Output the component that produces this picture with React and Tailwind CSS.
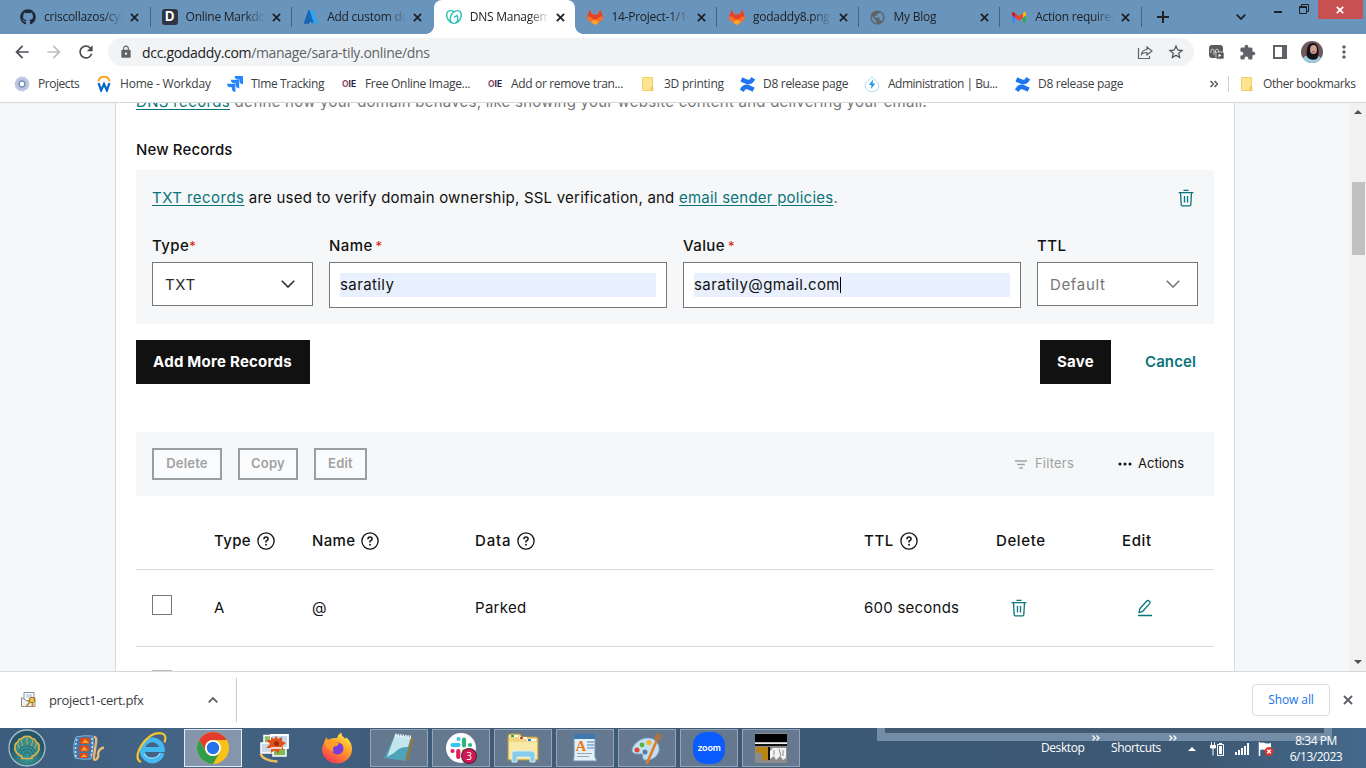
import React from "react";
import { FaGithub } from "react-icons/fa";
import { SiGodaddy, SiConfluence, SiJira } from "react-icons/si";
import { MdArrowBack, MdArrowForward, MdRefresh, MdLock, MdStarOutline, MdExtension, MdMoreVert, MdPublic } from "react-icons/md";

/* ---------- small drawings ---------- */

const Cross = ({ className = "", w = 2 }) => (
  <svg viewBox="0 0 10 10" className={className} fill="none" stroke="currentColor" strokeWidth={w}>
    <path d="M1 1l8 8M9 1l-8 8" />
  </svg>
);

const Gitlab = () => (
  <svg viewBox="0 0 16 16" className="h-4 w-4">
    <path d="M2.800.8L5.200 5.500h5.600L13.200.8 16 8q.3 2-1.500 3.500L8 16 1.500 11.500Q-.3 10 0 8z" fill="#fc6d26" />
    <path d="M2.800.8L5.200 5.500h5.600L13.200.8 15.800 7.300q-2.300 0-4 1.300L8 11.500 4.200 8.600q-1.700-1.300-4-1.300z" fill="#e24329" />
    <path d="M4 13.200L8 10.200l4 3L8 16z" fill="#fca326" />
  </svg>
);

const Dillinger = () => (
  <span className="flex h-4 w-4 items-center justify-center rounded-[3px] bg-[#2f3440] font-['Inter',sans-serif] text-[13px] font-bold text-white">D</span>
);

const Azure = () => (
  <svg viewBox="0 0 16 16" className="h-4 w-4">
    <path d="M5.600 1h4L6 14.500H1z" fill="#114a8b" />
    <path d="M9.500 1H5.600L.8 14.500h3.600l1.200-3 4 3z" fill="#1568b8" />
    <path d="M6.500 1h4L15.200 14.700h-4.400z" fill="#2fa4ea" />
    <path d="M7.800 5l3 9.500-5.600-3.800h3.900z" fill="#0a6cc0" />
  </svg>
);

const Gmail = () => (
  <svg viewBox="0 0 16 16" className="h-4 w-4">
    <path d="M1 4v9.500h3.200V8z" fill="#4285f4" />
    <path d="M15 4v9.500h-3.200V8z" fill="#34a853" />
    <path d="M11.800 4.200Q15 1.800 15 4v2.300l-3.200 2.500z" fill="#fbbc04" />
    <path d="M4 4.200V8.800L8 11.800l4-3V4.200L8 7.200z" fill="#ea4335" />
    <path d="M1 4q0-2.200 3.200.2v4.600L1 6.300z" fill="#c5221f" />
  </svg>
);

const Workday = () => (
  <svg viewBox="0 0 16 16" className="h-4 w-4" fill="none">
    <path d="M2.500 5.500a5.500 4.800 0 0 1 11 0" stroke="#f9a01b" strokeWidth="2" />
    <path d="M2.600 7l2.500 7.500L8 8l2.900 6.500L13.400 7" stroke="#0568c4" strokeWidth="2.200" />
  </svg>
);

const Oie = () => (
  <span className="flex h-4 w-4 items-center justify-center font-['Inter',sans-serif] text-[8.500px] font-bold">
    <span className="text-[#8a4a68]">O</span><span className="text-[#2b2140]">IE</span>
  </span>
);

const Gear = () => (
  <svg viewBox="0 0 16 16" className="h-4 w-4">
    <circle cx="8" cy="8" r="7.200" fill="#b9c6de" stroke="#cfd8e8" strokeDasharray="2.500 2" />
    <circle cx="8" cy="8" r="3.700" fill="#7a93c0" />
    <circle cx="8" cy="8" r="2.200" fill="#fff" />
  </svg>
);

const Folder = () => (
  <svg viewBox="0 0 16 16" className="h-4 w-4">
    <path d="M2.500 1.500h10V13h-1v1.500h-9z" fill="#fee391" stroke="#f0cf64" />
    <path d="M11 14.500V11.500q1-1.500 2 0v3z" fill="#fee391" stroke="#e5b93c" strokeWidth=".8" />
  </svg>
);

const Drop = () => (
  <svg viewBox="0 0 16 16" className="h-4 w-4">
    <path d="M8 .8C10 4 14.800 5.500 14.800 9.500a6.500 6 0 0 1-13.600 0C1.200 5.500 6 4 8 .8z" fill="#fff" stroke="#a9ddf3" />
    <path d="M9 3.500L5 9h2.500L7 13l4.200-5.500H8.600z" fill="#1798d9" />
  </svg>
);

const Trash = () => (
  <svg viewBox="0 0 18 18" className="h-[18px] w-[18px] text-[#09757a]" fill="none" stroke="currentColor" strokeWidth="1.300">
    <path d="M6.500 1.400h5M1.600 3.600h14.800M3.500 3.600l.7 12.100q.1 1.200 1.100 1.200h7.400q1 0 1.100-1.200l.7-12.100M7.500 7v6.500M10.500 7v6.500" />
  </svg>
);

const Pencil = () => (
  <svg viewBox="0 0 18 18" className="h-[18px] w-[18px] text-[#09757a]" fill="none" stroke="currentColor" strokeWidth="1.300" strokeLinejoin="round">
    <path d="M3 13.700l.8-3.900L10.800 2q1-1 2.400.1 1.400 1.200.6 2.300L6.800 12.300zM2 16.500h14" />
  </svg>
);

const Help = () => (
  <svg viewBox="0 0 18 18" className="h-[18px] w-[18px] text-[#111]" fill="none" stroke="currentColor">
    <circle cx="9" cy="9" r="8.100" strokeWidth="1.300" />
    <path d="M6.900 7.200Q7 5.100 9 5.100t2.100 1.900Q11.100 8.300 9 9.200v1.200" strokeWidth="1.500" />
    <circle cx="9" cy="12.700" r=".95" fill="currentColor" stroke="none" />
  </svg>
);

const Chevron = ({ className }) => (
  <svg viewBox="0 0 14 8" className={className} fill="none" stroke="currentColor" strokeWidth="1.600">
    <path d="M.8.800L7 7 13.200.800" />
  </svg>
);

/* ---------- browser frame ---------- */

const TABS = [
  { icon: <FaGithub className="h-4 w-4 text-[#1f2937]" />, text: "criscollazos/cybersec" },
  { icon: <Dillinger />, text: "Online Markdown" },
  { icon: <Azure />, text: "Add custom domain" },
  { icon: <SiGodaddy className="h-4 w-4 text-[#2fbfb9]" />, text: "DNS Management", active: true },
  { icon: <Gitlab />, text: "14-Project-1/1-Less" },
  { icon: <Gitlab />, text: "godaddy8.png (1" },
  { icon: <MdPublic className="h-[17px] w-[17px] shrink-0 text-[#5f6368]" />, text: "My Blog" },
  { icon: <Gmail />, text: "Action required: ve" },
];

function TabStrip() {
  return (
    <div className="flex h-[34px] shrink-0 bg-[#6995bd] pl-[9px]">
      {TABS.map((t, i) => (
        <div
          key={t.text}
          className={
            "relative flex h-[34px] w-[141.600px] shrink-0 items-center " +
            (i === 3 || i === 4 || i === 5 ? "pl-[12px] " : "pl-[11px] ") +
            (t.active ? "rounded-t-[8px] bg-white" : "")
          }
        >
          {t.active && (
            <>
              <span className="absolute bottom-0 -left-2 h-2 w-2 bg-[radial-gradient(circle_at_0_0,transparent_7.5px,white_8px)]" />
              <span className="absolute -right-2 bottom-0 h-2 w-2 bg-[radial-gradient(circle_at_100%_0,transparent_7.5px,white_8px)]" />
            </>
          )}
          <span className="flex h-4 w-4 items-center justify-center">{t.icon}</span>
          <span className="ml-2 w-[79px] overflow-hidden text-[12px] tracking-[-0.25px] whitespace-nowrap text-[#202124] [mask-image:linear-gradient(to_right,black_75%,transparent)]">
            {t.text}
          </span>
          <Cross className="ml-[7px] h-[9px] w-[9px] text-[#202124]" />
          {i !== 2 && i !== 3 && <span className="ml-auto h-5 w-px bg-[#46627d]" />}
        </div>
      ))}
      <svg viewBox="0 0 12 12" className="mt-[11px] ml-[15px] h-3 w-3" stroke="#202124" strokeWidth="2"><path d="M6 0v12M0 6h12" /></svg>
      <svg viewBox="0 0 10 6" className="mt-[14px] ml-[67px] h-[6px] w-[10px]" fill="none" stroke="#202124" strokeWidth="1.800"><path d="M.7.700L5 5 9.300.700" /></svg>
      <span className="mt-[11px] ml-[28px] h-[2px] w-[8px] bg-[#202124]" />
      <svg viewBox="0 0 10 10" className="mt-1 ml-[17px] h-[10px] w-[10px]" fill="none" stroke="#202124"><path d="M.5 2.500h7v7h-7zM2.500 2.500v-2h7v7h-2M.5 3.500h7" /></svg>
      <span className="ml-[9px] flex h-[19px] w-[45px] items-center justify-center bg-[#c75050]"><Cross className="h-2 w-2 text-white" w={2.2} /></span>
    </div>
  );
}

function Toolbar() {
  return (
    <div className="flex h-[32px] shrink-0 items-center bg-white pt-1 text-[#5f6368]">
      <MdArrowBack className="ml-[12px] h-5 w-5 text-[#4b4f54]" />
      <MdArrowForward className="ml-[12px] h-5 w-5 text-[#bcbec1]" />
      <MdRefresh className="ml-[12px] h-5 w-5 text-[#4b4f54]" />
      <div className="ml-[12px] flex h-7 w-[1086px] items-center rounded-full bg-[#f1f3f4]">
        <MdLock className="ml-[11px] h-[14px] w-[14px]" />
        <span className="ml-[9px] text-[14px] tracking-[-0.32px] whitespace-nowrap text-[#5f6368]">
          <span className="text-[#202124]">dcc.godaddy.com</span>/manage/sara-tily.online/dns
        </span>
        <svg viewBox="0 0 16 16" className="ml-auto h-4 w-4" fill="none" stroke="#5f6368" strokeWidth="1.200">
          <path d="M1.500 4v10.500H12.500V12M4.500 10.500Q5 6 10 5.500V3l5 4-5 4V8.500q-4 0-5.500 2z" />
        </svg>
        <MdStarOutline className="mr-[9px] ml-[14px] h-[18px] w-[18px] text-[#4b4f54]" />
      </div>
      <svg viewBox="0 0 16 16" className="ml-[14px] h-4 w-4">
        <rect x="1" y="1" width="14" height="13" rx="3" fill="#5b5b5b" />
        <path d="M3 9V6q1.500-2 3 0v5M7.500 9V6q1.500-2 3 0v3" stroke="#cfcfcf" fill="none" />
        <rect x="8" y="8" width="8" height="7" rx="1.500" fill="#555" stroke="#ddd" strokeWidth=".8" />
        <path d="M10.500 9.800v3.400l3-1.700z" fill="#fff" />
      </svg>
      <MdExtension className="ml-[15px] h-[17px] w-[17px]" />
      <svg viewBox="0 0 14 14" className="ml-[17px] h-[14px] w-[14px]"><path d="M1 1h12v12H1z" fill="none" stroke="#5f6368" strokeWidth="2" /><path d="M9 0h5v14H9z" fill="#5f6368" /></svg>
      <svg viewBox="0 0 22 22" className="ml-[14px] h-[22px] w-[22px]">
        <defs><clipPath id="avatar"><circle cx="11" cy="11" r="11" /></clipPath></defs>
        <g clipPath="url(#avatar)">
          <path d="M0 0h22v22H0z" fill="#6e5a5e" />
          <path d="M0 22q1-6 5-7l12 0q4 1 5 7z" fill="#9ccbdc" />
          <path d="M12 2q5 0 5.500 7 .5 7-2 9-5 2-9-1.500Q5 14 6 8q1-6 6-6z" fill="#17131a" />
          <ellipse cx="12.500" cy="8.500" rx="3.400" ry="4.600" fill="#d3a28e" />
          <path d="M11 10.800h3" stroke="#a04848" />
        </g>
      </svg>
      <MdMoreVert className="ml-[11px] h-5 w-5" />
    </div>
  );
}

const Bookmark = ({ w, icon, children, ls }) => (
  <div className={"flex shrink-0 items-center " + w}>
    <span className="flex h-4 w-4 shrink-0 items-center justify-center">{icon}</span>
    <span className={"ml-2 text-[12px] whitespace-nowrap text-[#3c4043] " + ls}>{children}</span>
  </div>
);

function Bookmarks() {
  const conf = <SiConfluence className="h-[15px] w-[15px] text-[#1f74f0]" />;
  return (
    <div className="flex h-[37px] shrink-0 items-center border-b border-[#d5d8db] bg-white pl-[14px]">
      <Bookmark w="w-[82px]" ls="tracking-[-0.45px]" icon={<Gear />}>Projects</Bookmark>
      <Bookmark w="w-[131px]" ls="tracking-[-0.2px]" icon={<Workday />}>Home - Workday</Bookmark>
      <Bookmark w="w-[114px]" ls="tracking-[-0.38px]" icon={<SiJira className="h-4 w-4 text-[#2684ff]" />}>TIme Tracking</Bookmark>
      <Bookmark w="w-[146px]" ls="tracking-[-0.32px]" icon={<Oie />}>Free Online Image...</Bookmark>
      <Bookmark w="w-[153px]" ls="tracking-[-0.34px]" icon={<Oie />}>Add or remove tran...</Bookmark>
      <Bookmark w="w-[99px]" ls="tracking-[-0.25px]" icon={<Folder />}>3D printing</Bookmark>
      <Bookmark w="w-[125px]" ls="tracking-[-0.3px]" icon={conf}>D8 release page</Bookmark>
      <Bookmark w="w-[150px]" ls="tracking-[-0.5px]" icon={<Drop />}>Administration | Bu...</Bookmark>
      <Bookmark w="w-[196px]" ls="tracking-[-0.3px]" icon={conf}>D8 release page</Bookmark>
      <svg viewBox="0 0 8 8" className="h-2 w-2" fill="none" stroke="#4b4f54" strokeWidth="1.400"><path d="M.5 1L3.500 4l-3 3M4.500 1l3 3-3 3" /></svg>
      <span className="ml-[10px] h-4 w-px bg-[#cfd1d4]" />
      <span className="w-[10px]" />
      <Bookmark w="w-[120px]" ls="tracking-[-0.4px]" icon={<Folder />}>Other bookmarks</Bookmark>
    </div>
  );
}

/* ---------- page ---------- */

const Label = ({ children, star, tight }) => (
  <div className="h-[32px] text-[15px] leading-[32px] font-medium tracking-[0.4px] text-[#111]">
    {children}
    {star && <span className={"text-[13px] font-normal text-[#db1802] " + (tight ? "" : "ml-[3px]")}>*</span>}
  </div>
);

const TextBox = ({ value, caret }) => (
  <div className="h-[46px] border border-[#767676] bg-white p-[10px]">
    <div className="flex h-6 items-center bg-[#e8f0fe] text-[15px] tracking-[0.4px] text-[#111]">
      {value}
      {caret && <span className="h-4 w-px bg-black" />}
    </div>
  </div>
);

const SelectBox = ({ value, muted }) => (
  <div className={"flex h-11 items-center justify-between border border-[#767676] bg-white pr-[17px] pl-3 text-[15px] tracking-[0.65px] " + (muted ? "text-[#767676]" : "text-[#2b2b2b]")}>
    <span className="pt-[2px]">{value}</span>
    <Chevron className="h-2 w-[14px]" />
  </div>
);

const GhostButton = ({ w, children }) => (
  <button className={"flex h-8 items-center justify-center border-2 border-[#9c9d9e] bg-[#fafbfc] text-[13px] font-semibold tracking-[0.2px] text-[#a0a1a2] " + w}>{children}</button>
);

const Head = ({ children, help, ls = "" }) => (
  <div className={"flex items-center gap-[6px] whitespace-nowrap " + ls}>
    <span className="pt-px">{children}</span>
    {help && <Help />}
  </div>
);

const GRID = "grid grid-cols-[62px_98px_163px_389px_132px_126px_1fr] items-center pl-4";
const LINK = "text-[#09757a] underline underline-offset-2";

function Page() {
  return (
    <div className="flex h-[568px] shrink-0 overflow-hidden bg-[#f5f7f8] font-['Inter',sans-serif]">
      <div className="ml-[115px] h-full w-[1120px] overflow-hidden border-x border-[#d6dadd] bg-white px-5">
        <p className="-mt-[13px] h-6 text-[15px] leading-6 tracking-[0.235px] whitespace-nowrap text-[#767676]">
          <span className={LINK + " tracking-[0.35px]"}>DNS records</span> define how your domain behaves, like showing your website content and delivering your email.
        </p>
        <h2 className="mt-[24px] h-6 text-[15px] leading-6 font-medium tracking-[0.12px] text-[#111]">New Records</h2>

        <section className="mt-2 h-[154px] bg-[#f5f7f8] px-4 pt-4">
          <div className="flex h-6 items-center justify-between pr-[3px]">
            <p className="text-[15px] leading-6 tracking-[0.215px] whitespace-nowrap text-[#111]">
              <span className={LINK + " tracking-[0.45px]"}>TXT records</span> are used to verify domain ownership, SSL verification, and{" "}
              <span className={LINK + " tracking-[0.24px]"}>email sender policies</span><span className="text-[#767676]">.</span>
            </p>
            <Trash />
          </div>
          <div className="mt-5 grid grid-cols-[161px_338px_338px_161px] gap-x-4">
            <div><Label star tight>Type</Label><SelectBox value="TXT" /></div>
            <div><Label star>Name</Label><TextBox value="saratily" /></div>
            <div><Label star>Value</Label><TextBox value="saratily@gmail.com" caret /></div>
            <div><Label>TTL</Label><SelectBox value="Default" muted /></div>
          </div>
        </section>

        <div className="mt-4 flex h-11 items-center text-[15px] tracking-[0.24px]">
          <button className="h-11 w-[174px] bg-[#111] pr-px font-bold text-white">Add More Records</button>
          <button className="ml-auto h-11 w-[71px] bg-[#111] font-bold text-white">Save</button>
          <button className="mr-[18px] ml-[34px] w-[51px] font-semibold tracking-[0.1px] text-[#09757a]">Cancel</button>
        </div>

        <div className="mt-12 flex h-16 items-center bg-[#f5f7f8] pr-[30px] pl-4">
          <GhostButton w="w-[70px]">Delete</GhostButton>
          <GhostButton w="w-[60px] ml-4">Copy</GhostButton>
          <GhostButton w="w-[53px] ml-4">Edit</GhostButton>
          <svg viewBox="0 0 12 9" className="ml-auto h-[9px] w-3" stroke="#a0a1a2" strokeWidth="1.500"><path d="M0 1h12M2.200 4.500h7.600M4.200 8h3.600" /></svg>
          <span className="ml-2 w-[39px] text-[13px] tracking-[0.2px] text-[#a0a1a2]">Filters</span>
          <svg viewBox="0 0 14 4" className="ml-[44px] h-1 w-[14px]" fill="#111"><circle cx="2" cy="2" r="1.500" /><circle cx="7" cy="2" r="1.500" /><circle cx="12" cy="2" r="1.500" /></svg>
          <span className="ml-[6px] w-[46px] text-[13px] text-[#111]">Actions</span>
        </div>

        <div className={GRID + " h-[74px] border-b border-[#d4dbe0] pt-[17px] text-[15px] font-medium tracking-[0.6px] text-[#111]"}>
          <span />
          <Head help ls="tracking-[0.35px]">Type</Head>
          <Head help ls="tracking-[0.35px]">Name</Head>
          <Head help ls="tracking-[0.8px]">Data</Head>
          <Head help>TTL</Head>
          <Head>Delete</Head>
          <Head>Edit</Head>
        </div>
        <div className={GRID + " h-[77px] border-b border-[#d4dbe0] text-[15px] tracking-[0.3px] text-[#111]"}>
          <span className="mb-[6px] h-5 w-5 border border-[#767676] bg-white" />
          <span>A</span>
          <span>@</span>
          <span>Parked</span>
          <span className="tracking-[0.24px]">600 seconds</span>
          <span className="ml-[14px]"><Trash /></span>
          <span className="ml-[14px]"><Pencil /></span>
        </div>
        <div className="pt-[23px] pl-4">
          <span className="block h-5 w-5 border border-[#bdbdbd]" />
        </div>
      </div>
      <div className="ml-auto flex w-4 flex-col items-center bg-[#f1f1f1]">
        <svg viewBox="0 0 8 4" className="mt-[7px] h-1 w-2" fill="#505050"><path d="M0 4L4 0l4 4z" /></svg>
        <span className="mt-[68px] h-[73px] w-[13px] bg-[#c1c1c1]" />
        <svg viewBox="0 0 8 4" className="mt-auto mb-[7px] h-1 w-2" fill="#505050"><path d="M0 0l4 4 4-4z" /></svg>
      </div>
    </div>
  );
}

/* ---------- downloads bar ---------- */

function Downloads() {
  return (
    <div className="flex h-[57px] shrink-0 items-center border-t border-[#d5d8db] bg-white">
      <svg viewBox="0 0 16 16" className="ml-[21px] h-4 w-4">
        <path d="M3 .5h10v8H3z" fill="#fff" stroke="#8b8f94" />
        <path d="M5 3h6M5 5h6" stroke="#9bb7d4" />
        <path d="M.5 5.500L8 10l6-4.500v9H.5z" fill="#f0f0ee" stroke="#8b8f94" />
        <circle cx="11" cy="8" r="2.700" fill="#f7c548" stroke="#9a6a14" />
        <path d="M9.500 9.500L5.500 14M11.500 10.500v4.500" stroke="#c48a22" strokeWidth="1.800" />
      </svg>
      <span className="ml-3 w-[96px] pt-px text-[13px] tracking-[-0.33px] whitespace-nowrap text-[#3c4043]">project1-cert.pfx</span>
      <svg viewBox="0 0 10 6" className="ml-[63px] h-[6px] w-[10px]" fill="none" stroke="#5f6368" strokeWidth="1.800"><path d="M.7 5.300L5 1l4.300 4.300" /></svg>
      <span className="ml-[18px] h-11 w-px bg-[#c9cbce]" />
      <button className="ml-auto h-8 w-[78px] rounded-[4px] border border-[#dadce0] text-[12px] font-medium tracking-[-0.1px] text-[#1a73e8]">Show all</button>
      <Cross className="mr-[13px] ml-[13px] h-[10px] w-[10px] text-[#5f6368]" />
    </div>
  );
}

/* ---------- taskbar ---------- */

const Shell = () => (
  <svg viewBox="0 0 38 38" className="h-[38px] w-[38px]">
    <defs><radialGradient id="orb" cy=".75"><stop offset="0" stopColor="#3fa39c" /><stop offset="1" stopColor="#23566a" /></radialGradient></defs>
    <circle cx="19" cy="19" r="18" fill="url(#orb)" stroke="#a9bfca" strokeWidth="1.300" />
    <path d="M14 29.500v-2l-3-1.500Q6 22 7 18q-.5-3.500 3-5 .5-3.500 4-3.500Q16 7 19 7.500q3-.5 5 2 3.500 0 4 3.500 3.500 1.500 3 5 1 4-4 8l-3 1.500v2z" fill="#358f8c" stroke="#e3b04d" strokeWidth="1.700" strokeLinejoin="round" />
    <path d="M12 20L9 14M14.500 17L13 10.500M19 15.500V8.500M23.500 17L25 10.500M26 20l3-6" stroke="#c9a854" strokeWidth="1" />
    <path d="M11 23q1-6 8-6t8 6M13 25q1-5 6-5t6 5M15.500 27q.5-4 3.500-4t3.500 4" stroke="#276f78" strokeWidth="1.200" fill="none" />
  </svg>
);

const MovieMaker = () => (
  <svg viewBox="0 0 34 28" className="h-7 w-[34px]">
    <path d="M4 3q8-2 17-1 1 12-2 23-8 1-16-1Q0 12 4 3z" fill="#3c78b0" stroke="#7eb2dc" />
    <path d="M8 4q5-1 10 0l-.5 6H7.500zM7 11.500h10.500l-.5 6H7zM7 19h9.500l-.5 5H7.500z" fill="#d94a18" />
    <path d="M10 9l3-4 4 4zM9 16.500l3-4 4 4zM9 23l3-3 3 3z" fill="#f5a62c" />
    <path d="M4.800 5q-2 9-.8 18M20 4q1 9-1 19" fill="none" stroke="#cfe4f4" strokeWidth="1.500" strokeDasharray="2 2" />
    <path d="M22 3q3 0 2 6t-2 13q-1 5 2 3.500 3-2 2-6 1-5 6-6" fill="none" stroke="#e9b878" strokeWidth="2.400" />
  </svg>
);

const Explorer = () => (
  <svg viewBox="0 0 32 32" className="h-8 w-8" fill="none">
    <path d="M27 21A10 10.500 0 1 1 27.300 17.500H9" stroke="#45b8f0" strokeWidth="5" />
    <path d="M25 21.500A9.500 9.500 0 0 1 9 22" stroke="#9adffb" strokeWidth="1.300" />
    <path d="M6 30Q-1 27 6 14 16-1 27 1.500q5 1 2.500 9" stroke="#f3c62c" strokeWidth="2.200" />
  </svg>
);

const Chrome = () => (
  <svg viewBox="0 0 32 32" className="h-8 w-8">
    <circle cx="16" cy="16" r="16" fill="#fbc116" />
    <path d="M2.150 8A16 16 0 0 1 29.850 8H16a8 8 0 0 0-6.930 12z" fill="#e33b2e" />
    <path d="M2.150 8A16 16 0 0 0 16 32l6.930-12A8 8 0 0 1 9.070 20z" fill="#2f9e4c" />
    <circle cx="16" cy="16" r="8" fill="#fff" />
    <circle cx="16" cy="16" r="6.200" fill="#2473e8" />
  </svg>
);

const Gallery = () => (
  <svg viewBox="0 0 32 30" className="h-[30px] w-8">
    <path d="M1.500 21q3 7 17 7.500" fill="none" stroke="#edba62" strokeWidth="2.500" />
    <path d="M14 12h13v11H14z" fill="#7dbb5b" stroke="#fff" strokeWidth="1.500" />
    <path d="M5 2.500h10v10H5z" fill="#8bbf6a" stroke="#fff" strokeWidth="1.500" />
    <path d="M2 10h12v10H2z" fill="#c9d8e8" stroke="#fff" strokeWidth="1.500" />
    <path d="M12 2h17v13H12z" fill="#c5d7ea" stroke="#fff" strokeWidth="1.800" />
    <path d="M17 3l2 3 4-2v4l4 2-4 3 2 4-4-1-2 5-3-4-4 3V15l-5 0 4-4-4-4 5 0v-3l3 2z" fill="#e2521a" />
    <path d="M12 15h11" stroke="#fff" strokeWidth="1.500" />
    <circle cx="17.500" cy="10.500" r="2.500" fill="#9c2f0c" />
  </svg>
);

const Firefox = () => (
  <svg viewBox="0 0 32 32" className="h-8 w-8">
    <defs><linearGradient id="fx" x1=".8" y1="0" x2=".2" y2="1"><stop offset="0" stopColor="#fff04a" /><stop offset=".45" stopColor="#ff9a26" /><stop offset="1" stopColor="#f5305c" /></linearGradient></defs>
    <path d="M3.500 10l1.500-5q1 2 2.500 2.500 2.500-1.500 6-1.500L16 6q1.500-4 4-5.500.5 3.500 4 6l1.500-1q5.500 5 5.500 11.500a15 14.500 0 0 1-30 0q0-4 2.500-7z" fill="url(#fx)" />
    <circle cx="16.500" cy="16.500" r="6" fill="#7a3be0" />
    <path d="M3 9.500q6-3 9 0l6 1.500q-1 3.500-5 3.500-2 2 0 5-7-1-10-10z" fill="#ff9d28" />
  </svg>
);

const Notepad = () => (
  <svg viewBox="0 0 32 32" className="h-8 w-8">
    <path d="M27 5l4 2-6 22-5-1z" fill="#8a7a4a" />
    <path d="M12 3l16 2-6 24-21-3z" fill="#4fa3b8" />
    <path d="M12 3l16 2-3 10q-8-1-14 6l-7 4z" fill="#c3e5ec" />
    <path d="M12 3l16 2" stroke="#eef3f4" strokeWidth="3" strokeDasharray="1.500 1" />
  </svg>
);

const Slack = () => (
  <span className="relative block h-[30px] w-[30px]">
    <svg viewBox="0 0 30 30" className="h-[30px] w-[30px]">
      <circle cx="15" cy="15" r="15" fill="#fff" />
      <g strokeWidth="4.200" strokeLinecap="round">
        <path d="M6.500 12h6M12.500 6h.01" stroke="#36c5f0" />
        <path d="M18 6.500v6M24 12h.01" stroke="#2eb67d" />
        <path d="M18 18h6M18 24h.01" stroke="#ecb22e" />
        <path d="M12.300 18v6M6.500 18h.01" stroke="#e01e5a" />
      </g>
    </svg>
    <span className="absolute top-[16px] left-[16px] flex h-[14px] w-[14px] items-center justify-center rounded-full bg-[#cf1850] text-[10px] leading-none text-white ring-1 ring-[#4d2540]">3</span>
  </span>
);

const Files = () => (
  <svg viewBox="0 0 32 30" className="h-[30px] w-8">
    <path d="M1 3q0-2 2-2h10l2 3h14q2 0 2 2v21H1z" fill="#f0d67c" stroke="#b8953a" />
    <path d="M3 2h8v2H3z" fill="#fff" /><path d="M4 2h3v2H4z" fill="#2aa83f" />
    <path d="M12 4h8v2h-8z" fill="#fff" /><path d="M13 4h3v2h-3z" fill="#d8452b" />
    <path d="M20 6h9v2h-9z" fill="#fff" /><path d="M21 6h3v2h-3z" fill="#2a80d8" />
    <path d="M2 9h28v17H2z" fill="#f9e9a6" />
    <path d="M5 29V20q0-2 3-2h16q4 0 4 3v8h-5v-5H10v5z" fill="#86cbea" stroke="#d3eefa" />
  </svg>
);

const WordPad = () => (
  <svg viewBox="0 0 24 28" className="h-7 w-6">
    <path d="M1 1h21v22l2 4H0l1-4z" fill="#e3f0f9" stroke="#6d93b5" />
    <path d="M1 0h21v5H1z" fill="#3f78ac" />
    <path d="M14 8h7M14 11h7M14 14h7" stroke="#4a7fc0" strokeWidth="1.200" />
    <path d="M4 19.500h15M4 22.500h12" stroke="#9ba6b0" />
    <text x="2.500" y="16.500" fontFamily="Liberation Serif, serif" fontSize="15" fontWeight="700" fill="#f07816">A</text>
  </svg>
);

const Paint = () => (
  <svg viewBox="0 0 32 32" className="h-8 w-8">
    <path d="M5 11Q13 4 22 7q7 4 6 12-3 9-13 9-4 0-3-4 0-3-5-2-5 0-6-3 0-4 4-8z" fill="#c3e0f2" stroke="#7fb2d6" />
    <circle cx="6" cy="18" r="2.500" fill="#e0452c" /><circle cx="11" cy="13" r="2.400" fill="#58b53c" />
    <circle cx="18" cy="10.500" r="2.600" fill="#f1b62c" /><circle cx="14" cy="20" r="2.500" fill="#587c9c" />
    <path d="M26 8L16 31" stroke="#e37a24" strokeWidth="2.600" strokeLinecap="round" />
    <path d="M23 6l2-5 6 2-1 4-4 3z" fill="#a8744c" />
  </svg>
);

const Zoom = () => (
  <span className="flex h-8 w-8 items-center justify-center rounded-[13px] bg-[#0b5cff] pb-px font-['Inter',sans-serif] text-[9px] font-semibold tracking-[-0.2px] text-white">zoom</span>
);

const Thumb = () => (
  <svg viewBox="0 0 32 30" className="h-[30px] w-8">
    <path d="M0 0h32v30H0z" fill="#8c8c8c" /><path d="M0 1h32v8H0z" fill="#000" />
    <path d="M0 9.500h32v1.500H0z" fill="#eee" /><path d="M0 11h32v2H0z" fill="#111" />
    <path d="M1 14h12v12q-3 3-6 1V20H1z" fill="#b98412" /><path d="M13 14h2v13h-2z" fill="#111" />
    <path d="M15 18l3-3h13v10l-3 2-3-4-4 4-2-4-4 3z" fill="#f3f3f3" />
    <path d="M19 17v5M24 16l2 7M28 17v6" stroke="#888" />
  </svg>
);

const TaskButton = ({ kind = "plain", children }) => (
  <span
    className={
      "flex h-[38px] w-[58px] shrink-0 items-center justify-center " +
      (kind === "active" ? "border border-[#e4ebf1] bg-[#8596ac]" : kind === "open" ? "border border-[#96a4b4] bg-[#64788f]" : "")
    }
  >
    {children}
  </span>
);

const More = () => (
  <svg viewBox="0 0 8 6" className="h-[6px] w-2" fill="none" stroke="#fff" strokeWidth="1.300"><path d="M.5.500L3 3 .5 5.500M4.500.500L7 3 4.500 5.500" /></svg>
);

function Taskbar() {
  return (
    <div className="relative flex h-10 shrink-0 items-center bg-[linear-gradient(to_right,#3d5d7e_0,#446485_13%,#3f5c7a_30%,#3b5875_60%,#3c5873_88%,#45698c_100%)] text-[12px] text-white">
      <div className="absolute top-0 left-[877px] h-[13px] w-[455px] border-x-8 border-b-8 border-[#728da5] bg-[#435b71]" />
      <div className="flex items-center gap-1">
        <span className="flex w-[56px] justify-center pr-[2px]"><Shell /></span>
        <TaskButton><MovieMaker /></TaskButton>
        <TaskButton><Explorer /></TaskButton>
        <TaskButton kind="active"><Chrome /></TaskButton>
        <TaskButton><Gallery /></TaskButton>
        <TaskButton><Firefox /></TaskButton>
        <TaskButton kind="open"><Notepad /></TaskButton>
        <TaskButton kind="open"><Slack /></TaskButton>
        <TaskButton kind="open"><Files /></TaskButton>
        <TaskButton kind="open"><WordPad /></TaskButton>
        <TaskButton kind="open"><Paint /></TaskButton>
        <TaskButton kind="open"><Zoom /></TaskButton>
        <TaskButton kind="open"><Thumb /></TaskButton>
      </div>
      <div className="relative ml-auto flex w-[325px] items-center">
        <span className="w-[51px] tracking-[-0.42px]">Desktop</span>
        <span className="mb-[20px] w-[19px]"><More /></span>
        <span className="w-[58px] tracking-[-0.4px]">Shortcuts</span>
        <span className="mb-[20px] w-[19px]"><More /></span>
        <svg viewBox="0 0 8 4" className="mt-[2px] h-1 w-2" fill="#fff"><path d="M0 4L4 0l4 4z" /></svg>
        <svg viewBox="0 0 16 16" className="mt-[2px] ml-[14px] h-4 w-4" fill="none" stroke="#fff">
          <path d="M1.500 1v4M4.500 1v4M3 7v7.500" /><path d="M.5 4.500h5v2.500h-5z" fill="#fff" />
          <path d="M7.500 3.500h6v11h-6zM9 2.500h3" /><path d="M9 5h3v8H9z" fill="#fff" stroke="none" />
        </svg>
        <svg viewBox="0 0 16 14" className="mt-[2px] ml-[8px] h-[14px] w-4" fill="#fff"><path d="M1 10h2v3H1zM4 8h2v5H4zM7 6h2v7H7zM10 4h2v9h-2zM13 1h2v12h-2z" /></svg>
        <svg viewBox="0 0 16 16" className="mt-[2px] ml-[8px] h-4 w-4">
          <path d="M1.500 1v14" stroke="#fff" strokeWidth="1.500" /><path d="M2 2q3-1 5 0t6 0v7q-4 1-6 0t-5 0z" fill="#fff" />
          <circle cx="11" cy="10.500" r="4.500" fill="#d8362a" /><path d="M9.200 8.700l3.600 3.600M12.800 8.700l-3.600 3.600" stroke="#fff" strokeWidth="1.400" />
        </svg>
        <span className="ml-[12px] flex w-[60px] flex-col items-center pt-px leading-[16px] tracking-[-0.48px] whitespace-nowrap">
          <span>8:34 PM</span>
          <span>6/13/2023</span>
        </span>
      </div>
    </div>
  );
}

export default function App() {
  return (
    <div className="flex h-[768px] w-[1366px] flex-col overflow-hidden bg-white font-['Open_Sans',sans-serif]">
      <TabStrip />
      <Toolbar />
      <Bookmarks />
      <Page />
      <Downloads />
      <Taskbar />
    </div>
  );
}
